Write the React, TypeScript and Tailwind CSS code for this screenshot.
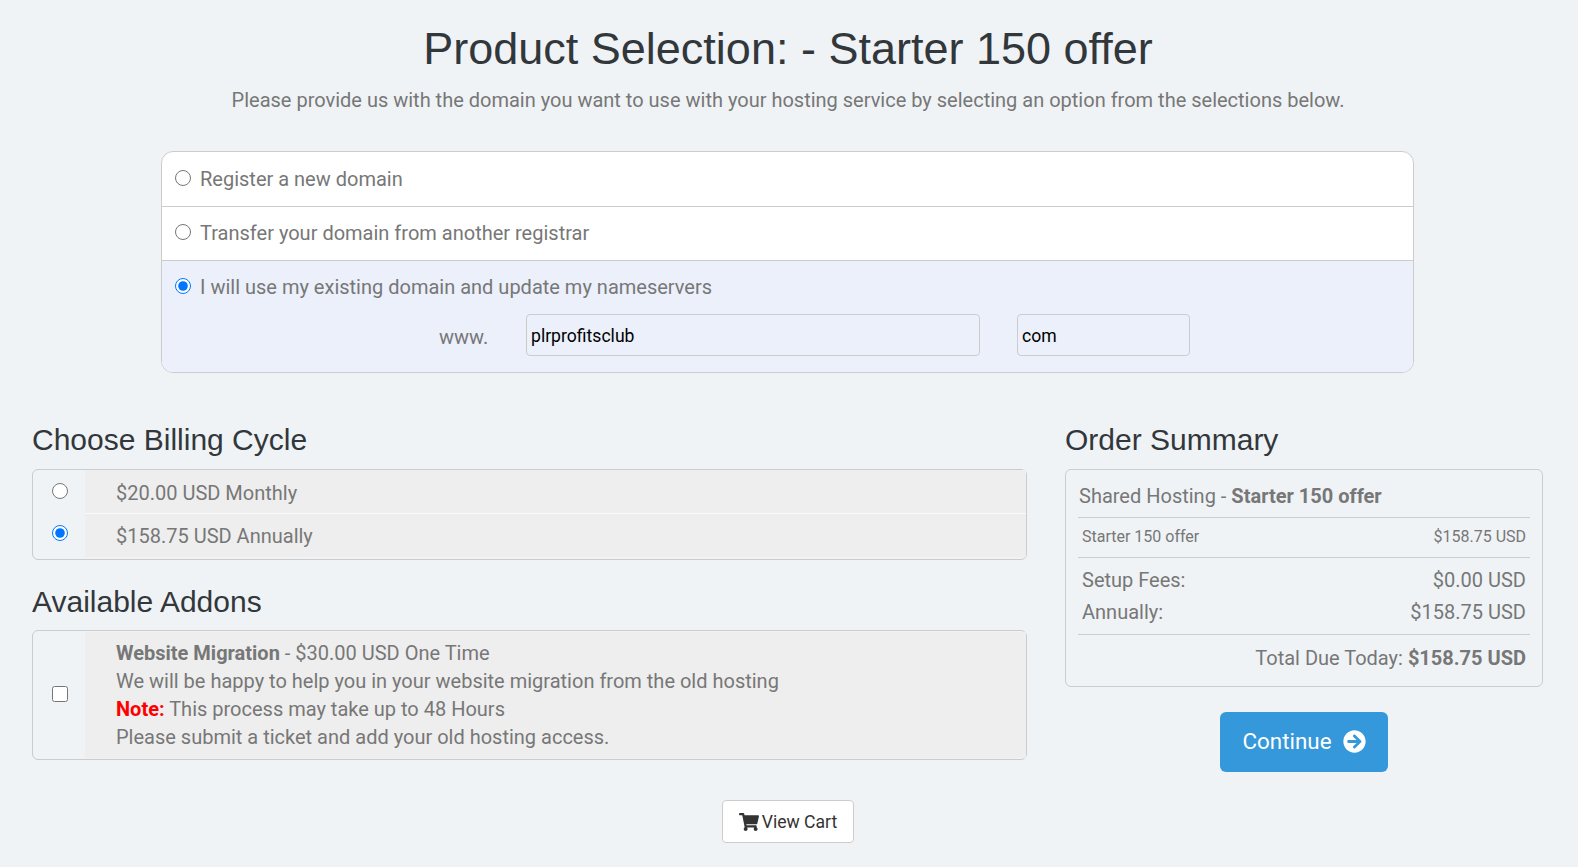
import { FaArrowCircleRight, FaShoppingCart } from "react-icons/fa";

export default function App() {
  return (
    <div className="min-h-[867px] bg-[#eff3f6] font-['Roboto',sans-serif] text-[20px] text-[#777777]">
      {/* Page heading */}
      <div className="pr-[2px] pt-[19px] text-center">
        <h1 className="font-['Liberation_Sans',sans-serif] text-[45px] leading-[60px] text-[#32373b]">
          Product Selection: - Starter 150 offer
        </h1>
        <p className="mt-[7px] leading-[28px]">
          Please provide us with the domain you want to use with your hosting service by selecting an option from the selections below.
        </p>
      </div>

      {/* Domain options */}
      <div className="ml-[161px] mr-[164px] mt-[37px] overflow-hidden rounded-[12px] border border-[#cccccc] bg-white">
        <label className="flex h-[55px] items-center border-b border-[#cccccc] pl-[13px]">
          <input type="radio" name="domain" className="m-0 mb-[2px] mr-[9px] size-[16px]" />
          <span>Register a new domain</span>
        </label>
        <label className="flex h-[54px] items-center border-b border-[#cccccc] pb-[2px] pl-[13px]">
          <input type="radio" name="domain" className="m-0 mb-[2px] mr-[9px] size-[16px]" />
          <span>Transfer your domain from another registrar</span>
        </label>
        <div className="h-[111px] bg-[#ebf0fb] pl-[13px]">
          <label className="flex h-[53px] items-center pb-[2px]">
            <input type="radio" name="domain" defaultChecked className="m-0 mb-[2px] mr-[9px] size-[16px]" />
            <span>I will use my existing domain and update my nameservers</span>
          </label>
          <div className="flex items-center">
            <span className="ml-[264px] w-[87px] pt-[3px] leading-[28px]">www.</span>
            <input
              type="text"
              readOnly
              value="plrprofitsclub"
              className="h-[42px] w-[454px] rounded-[4px] border border-[#cccccc] bg-[#ebf0fb] px-[4px] pt-[2px] text-[17.6px] text-black outline-none"
            />
            <input
              type="text"
              readOnly
              value="com"
              className="ml-[37px] h-[42px] w-[173px] rounded-[4px] border border-[#cccccc] bg-[#ebf0fb] px-[4px] pt-[2px] text-[17.6px] text-black outline-none"
            />
          </div>
        </div>
      </div>

      <div className="mt-[47px] flex pl-[32px]">
        {/* Billing and addons */}
        <div className="w-[995px]">
          <h2 className="font-['Liberation_Sans',sans-serif] text-[30px] leading-[40px] text-[#32373b]">Choose Billing Cycle</h2>
          <div className="mt-[9px] h-[91px] rounded-[6px] border border-[#cccccc]">
            <div className="flex h-[43px]">
              <div className="flex w-[52px] justify-center pl-[2px] pt-[13px]">
                <input type="radio" name="cycle" className="m-0 size-[16px]" />
              </div>
              <div className="flex-1 bg-[#eeeeee] pl-[31px] pt-[9px] leading-[28px]">$20.00 USD Monthly</div>
            </div>
            <div className="flex h-[44px]">
              <div className="flex w-[52px] justify-center pl-[2px] pt-[12px]">
                <input type="radio" name="cycle" defaultChecked className="m-0 size-[16px]" />
              </div>
              <div className="flex-1 border-t border-[#fafafa] bg-[#eeeeee] pl-[31px] pt-[8px] leading-[28px]">$158.75 USD Annually</div>
            </div>
          </div>

          <h2 className="mt-[22px] font-['Liberation_Sans',sans-serif] text-[30px] leading-[40px] text-[#32373b]">Available Addons</h2>
          <div className="mt-[8px] flex h-[130px] rounded-[6px] border border-[#cccccc] py-[1px]">
            <div className="flex w-[52px] items-center justify-center pb-[2px] pl-[2px]">
              <input type="checkbox" className="m-0 size-[16px]" />
            </div>
            <div className="flex-1 bg-[#eeeeee] pl-[31px] pt-[7px] leading-[28px]">
              <div>
                <strong className="font-bold">Website Migration</strong> - $30.00 USD One Time
              </div>
              <div>We will be happy to help you in your website migration from the old hosting</div>
              <div>
                <strong className="font-bold text-[#ff0000]">Note:</strong> This process may take up to 48 Hours
              </div>
              <div>Please submit a ticket and add your old hosting access.</div>
            </div>
          </div>
        </div>

        {/* Order summary */}
        <div className="ml-[38px] w-[478px]">
          <h2 className="font-['Liberation_Sans',sans-serif] text-[30px] leading-[40px] text-[#32373b]">Order Summary</h2>
          <div className="mt-[9px] h-[218px] rounded-[6px] border border-[#cccccc] px-[12px]">
            <div className="h-[48px] border-b border-[#cccccc] pl-[1px] pt-[12px] leading-[28px]">
              Shared Hosting - <strong className="font-bold">Starter 150 offer</strong>
            </div>
            <div className="flex h-[40px] items-center justify-between border-b border-[#cccccc] px-[4px] pb-[2px] text-[16px]">
              <span>Starter 150 offer</span>
              <span>$158.75 USD</span>
            </div>
            <div className="h-[77px] border-b border-[#cccccc] px-[4px] pt-[6px] leading-[32px]">
              <div className="flex justify-between">
                <span>Setup Fees:</span>
                <span>$0.00 USD</span>
              </div>
              <div className="flex justify-between">
                <span>Annually:</span>
                <span>$158.75 USD</span>
              </div>
            </div>
            <div className="px-[4px] pt-[9px] text-right leading-[28px]">
              Total Due Today: <strong className="font-bold">$158.75 USD</strong>
            </div>
          </div>
          <div className="mt-[25px] flex justify-center">
            <button className="flex h-[60px] w-[168px] items-center justify-center gap-[11px] rounded-[6px] bg-[#3498db] text-[22.4px] text-white">
              Continue
              <FaArrowCircleRight className="mb-[2px] size-[23px]" />
            </button>
          </div>
        </div>
      </div>

      {/* View cart */}
      <div className="mt-[28px] flex justify-center pr-[2px]">
        <button className="flex h-[43px] w-[132px] items-center justify-center gap-[3px] rounded-[4px] border border-[#cccccc] bg-white pt-[2px] text-[17.6px] text-[#333333]">
          <FaShoppingCart className="mb-[2px] size-[20px]" />
          View Cart
        </button>
      </div>
    </div>
  );
}
